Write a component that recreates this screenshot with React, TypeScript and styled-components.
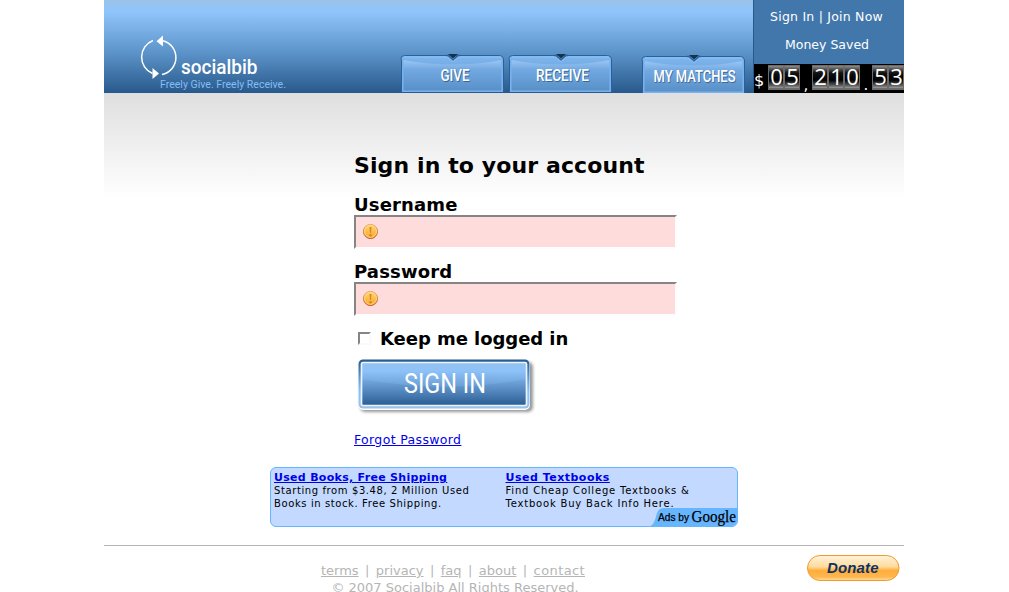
import React from "react";
import styled, { createGlobalStyle } from "styled-components";

const Global = createGlobalStyle`
  html, body { margin: 0; padding: 0; background: #fff; height: 592px; overflow: hidden; }
  body { font-family: "DejaVu Sans", Verdana, sans-serif; font-size: 13px; color: #000; }
  * { box-sizing: border-box; }
  svg { display: block; overflow: visible; }
`;

const Page = styled.div`
  width: 800px;
  margin-left: 104px;
  height: 592px;
`;

const Header = styled.header`
  display: flex;
  height: 93px;
  background: linear-gradient(#9cc3e8 0, #8fc5fc 11px, #8dc2f9 14px, #5f97cc 50px, #28598c 93px);
`;

const Brand = styled.div`
  width: 296px;
  padding: 32px 0 0 34px;
`;

const Nav = styled.nav`
  display: flex;
  align-items: flex-start;
  width: 353px;
  padding-top: 53px;
`;

const TabLink = styled.a<{ $gap: number; $drop?: number }>`
  width: 106px;
  height: 40px;
  margin-left: ${(p) => p.$gap}px;
  margin-top: ${(p) => p.$drop ?? 0}px;
`;

const Account = styled.aside`
  width: 151px;
  background: #4277ab;
  border-left: 1px solid #28598c;
  color: #fff;
`;

const AccountLine = styled.div<{ $top: number; $height: number; $spacing: number; $shift?: number }>`
  height: ${(p) => p.$height}px;
  padding-top: ${(p) => p.$top}px;
  padding-right: ${(p) => p.$shift ?? 0}px;
  line-height: 18px;
  font-size: 12.5px;
  letter-spacing: ${(p) => p.$spacing}px;
  text-align: center;
`;

const Counter = styled.div`
  display: flex;
  height: 29px;
  background: #000;
`;

const Mark = styled.span<{ $width: number; $size: number; $line: number; $left?: boolean }>`
  width: ${(p) => p.$width}px;
  height: 29px;
  font-size: ${(p) => p.$size}px;
  line-height: ${(p) => p.$line}px;
  text-align: ${(p) => (p.$left ? "left" : "center")};
  flex: none;
`;

const Digit = styled.span`
  width: 16px;
  height: 25px;
  flex: none;
  margin-top: 1px;
  border: solid #6c6c6c;
  border-width: 1px 1px 2px 1px;
  background: linear-gradient(#8c8c8c 0, #555 3px, #111 7px, #000 14px, #555 19px, #999 22px);
  font: 22px/21px "Open Sans", sans-serif;
  letter-spacing: -1px;
  text-align: center;
`;

const Main = styled.main`
  height: 374px;
  padding: 57px 0 0 250px;
  background: linear-gradient(#dfdfdf 0, #fff 105px);
`;

const Title = styled.h1`
  margin: 0;
  height: 42px;
  line-height: 32px;
  font-size: 22px;
  letter-spacing: 0.11px;
`;

const Field = styled.label`
  display: block;
  height: 67px;
`;

const Caption = styled.span`
  display: block;
  height: 23px;
  line-height: 26px;
  font-size: 18px;
  font-weight: bold;
  letter-spacing: 0.15px;
`;

const InputBox = styled.span`
  display: flex;
  align-items: center;
  width: 323px;
  height: 34px;
  padding: 0 0 2px 6px;
  border: 2px solid;
  border-color: #858585 #fdfdfd #fdfdfd #858585;
  background: #ffdcdc;
`;

const Remember = styled.label`
  display: flex;
  align-items: center;
  height: 24px;
  padding-left: 4px;
  font-size: 18px;
  font-weight: bold;
  letter-spacing: -0.05px;
`;

const Box = styled.span`
  width: 13px;
  height: 13px;
  margin-right: 9px;
  border: 2px solid;
  border-color: #858585 #fafafa #fafafa #858585;
`;

const SubmitArt = styled.div`
  height: 81px;
  padding-top: 3px;
`;

const Forgot = styled.a`
  display: block;
  line-height: 18px;
  font-size: 12.5px;
  letter-spacing: 0.35px;
  color: #0000e8;
  text-decoration: underline;
  width: max-content;
`;

const Ads = styled.section`
  display: flex;
  position: relative;
  width: 468px;
  height: 60px;
  margin-left: 166px;
  padding: 3px 0 0 3px;
  border: 1px solid #66b5ff;
  border-radius: 6px;
  background: #c3d9ff;
  overflow: hidden;
`;

const Ad = styled.div<{ $spacing: number }>`
  width: 232px;
  font-size: 10px;
  line-height: 13px;
  letter-spacing: ${(p) => p.$spacing}px;
  white-space: nowrap;
`;

const AdTitle = styled.a<{ $spacing: number }>`
  display: block;
  font-size: 11px;
  font-weight: bold;
  letter-spacing: ${(p) => p.$spacing}px;
  color: #0000e8;
  text-decoration: underline;
  width: max-content;
`;

const AdBrand = styled.div`
  position: absolute;
  right: -1px;
  bottom: -1px;
`;

const Footer = styled.footer`
  display: flex;
  margin-top: 18px;
  height: 47px;
  border-top: 1px solid #b5b5b5;
  color: #b5b5b5;
`;

const Legal = styled.div`
  width: 698px;
  padding-top: 16px;
  font-size: 13px;
  line-height: 17px;
`;

const LegalLinks = styled.div`
  text-align: center;
  word-spacing: 2.3px;
`;

const Copyright = styled.div`
  padding-left: 4px;
  text-align: center;
`;

const LegalLink = styled.a<{ $spacing?: number }>`
  letter-spacing: ${(p) => p.$spacing ?? 0}px;
  text-decoration: underline;
`;

const Donate = styled.div`
  padding: 8px 0 0 4px;
`;

type LabelProps = {
  x: number;
  y: number;
  w: number;
  size: number;
  children: string;
  fill?: string;
  weight?: number;
  family?: string;
};

const ArtLabel = ({ x, y, w, size, children, fill = "#fff", weight = 400, family = "Roboto, sans-serif" }: LabelProps) => (
  <text x={x} y={y} textLength={w} lengthAdjust="spacingAndGlyphs" fontFamily={family} fontSize={size} fontWeight={weight} fill={fill}>
    {children}
  </text>
);

const Logo = () => (
  <svg width="152" height="61" viewBox="138 32 152 61">
    <g fill="none" stroke="#fff" strokeWidth="1.5">
      <path d="M153 40.500A17.800 17.800 0 0 0 152.500 73.500" />
      <path d="M163 40.800A17.300 17.300 0 0 1 162 74.500" />
    </g>
    <path d="M156.500 41.200L163 35.500V46.500ZM159 73.500L152.500 68V79Z" fill="#fff" />
    <ArtLabel x={181} y={74} w={76.5} size={21} weight={500}>socialbib</ArtLabel>
    <ArtLabel x={160} y={87.5} w={126} size={11.5} fill="#86bdf4">Freely Give. Freely Receive.</ArtLabel>
  </svg>
);

type TabProps = { label: string; x: number; w: number; gap: number; drop?: number };

const TabShadow = styled.g`
  text {
    text-shadow: 1px 1px 0 #3b6894;
  }
`;

const Tab = ({ label, x, w, gap, drop }: TabProps) => (
  <TabLink $gap={gap} $drop={drop}>
    <svg width="106" height={drop ? 39 : 40} viewBox={drop ? "0 0 106 39" : "0 0 106 40"}>
      <defs>
        <linearGradient id={`tab${w}`} x1="0" y1="0" x2="0" y2="1">
          <stop offset="0" stopColor="#80b6ee" />
          <stop offset="0.45" stopColor="#70a6df" />
          <stop offset="1" stopColor="#568ec6" />
        </linearGradient>
        <linearGradient id={`gloss${w}`} x1="0" y1="0" x2="0" y2="1">
          <stop offset="0" stopColor="#a5cef8" />
          <stop offset="1" stopColor="#70a6df" />
        </linearGradient>
      </defs>
      <path d="M1.500 39V7L0.800 6Q1 2.500 4.500 2.500H99.500Q103 2.500 103.500 6L103.500 7V39" fill={`url(#tab${w})`} stroke="#28629b" />
      <path d="M3 7Q53 16 102 7V17H3Z" fill={`url(#gloss${w})`} opacity="0.75" />
      <path d="M2.800 7V38.200H102.200V7" fill="none" stroke="#78b1ed" strokeWidth="1.6" />
      <path d="M4 4H47L53 8.500L59 4H101" fill="none" stroke="#8ec1f5" />
      <path d="M46 2.500H48L53 7L58 2.500H60" fill="#5e9cda" stroke="#28629b" strokeWidth="1.3" />
      <path d="M48 1H58L53 5.500Z" fill="#15324f" />
      <TabShadow>
        <ArtLabel x={x} y={28} w={w} size={16} weight={500}>{label}</ArtLabel>
      </TabShadow>
    </svg>
  </TabLink>
);

const Warning = () => (
  <svg width="17" height="17" viewBox="0 0 17 17">
    <defs>
      <linearGradient id="amber" x1="0" y1="0" x2="0" y2="1">
        <stop offset="0" stopColor="#ffd88c" />
        <stop offset="0.5" stopColor="#ffbd4a" />
        <stop offset="1" stopColor="#f8a534" />
      </linearGradient>
      <linearGradient id="rim" x1="0" y1="0" x2="0" y2="1">
        <stop offset="0" stopColor="#e9a04c" />
        <stop offset="1" stopColor="#b9501c" />
      </linearGradient>
    </defs>
    <circle cx="8.500" cy="8.500" r="7" fill="url(#amber)" stroke="url(#rim)" />
    <circle cx="8.500" cy="8.300" r="6" fill="none" stroke="#ffe08a" strokeWidth="0.8" />
    <path d="M7.500 4H9.500L9 10H8Z" fill="#d08a20" />
    <circle cx="8.500" cy="12.200" r="1.200" fill="#d08a20" />
  </svg>
);

const SignIn = () => (
  <svg width="190" height="66" viewBox="354 353 190 66">
    <defs>
      <filter id="soft" x="-10%" y="-20%" width="120%" height="150%">
        <feGaussianBlur stdDeviation="1.8" />
      </filter>
      <linearGradient id="frame" x1="0" y1="0" x2="0" y2="1">
        <stop offset="0" stopColor="#28598c" />
        <stop offset="0.45" stopColor="#6ca4dc" />
        <stop offset="0.65" stopColor="#8bc0f7" />
        <stop offset="1" stopColor="#9cc3e8" />
      </linearGradient>
      <linearGradient id="face" x1="0" y1="0" x2="0" y2="1">
        <stop offset="0" stopColor="#93c0ed" />
        <stop offset="0.2" stopColor="#8bc1f9" />
        <stop offset="1" stopColor="#2a5d92" />
      </linearGradient>
      <linearGradient id="shine" x1="0" y1="0" x2="0" y2="1">
        <stop offset="0" stopColor="#9bcbfb" stopOpacity="0.1" />
        <stop offset="1" stopColor="#9bcbfb" stopOpacity="0.2" />
      </linearGradient>
    </defs>
    <rect x="360" y="362" width="173" height="50" rx="5" fill="#000" opacity="0.4" filter="url(#soft)" />
    <rect x="358" y="359" width="172" height="51" rx="5" fill="#fff" />
    <rect x="358.500" y="359.500" width="171" height="49" rx="4.500" fill="url(#frame)" />
    <rect x="361.500" y="362.500" width="165" height="43" rx="1.500" fill="url(#face)" stroke="#eaf4ff" strokeWidth="1.7" />
    <path d="M362 379Q444 394 526 379V363H362Z" fill="url(#shine)" />
    <ArtLabel x={404} y={393} w={82} size={27} weight={400}>SIGN IN</ArtLabel>
  </svg>
);

const GoogleTag = () => (
  <svg width="90" height="19" viewBox="648 508 90 19">
    <path d="M648 527Q653 526 655 520L657 513Q659 508 664 508H738V527Z" fill="#66b5ff" />
    <g stroke="#000" strokeWidth="0.25">
      <ArtLabel x={658} y={521} w={31} size={10} fill="#000" family="Liberation Sans, sans-serif">Ads by</ArtLabel>
      <ArtLabel x={691.5} y={522} w={44.5} size={16.5} fill="#000" family="Liberation Serif, serif">Google</ArtLabel>
    </g>
  </svg>
);

const DonateButton = () => (
  <svg width="94" height="28" viewBox="806 554 94 28">
    <defs>
      <linearGradient id="gold" x1="0" y1="0" x2="0" y2="1">
        <stop offset="0" stopColor="#fff3dc" />
        <stop offset="0.45" stopColor="#ffdb9c" />
        <stop offset="0.6" stopColor="#ffae3c" />
        <stop offset="0.85" stopColor="#ffb64d" />
        <stop offset="1" stopColor="#ffe0a0" />
      </linearGradient>
    </defs>
    <rect x="807.500" y="555.500" width="91.500" height="25" rx="12.500" fill="url(#gold)" stroke="#ef9a2d" />
    <text x="827" y="573" textLength="51.500" fontFamily="Liberation Sans, sans-serif" fontSize="15" fontWeight="bold" fontStyle="italic" fill="#0e3265">Donate</text>
  </svg>
);

export default function App() {
  return (
    <>
      <Global />
      <Page>
        <Header>
          <Brand><Logo /></Brand>
          <Nav>
            <Tab label="GIVE" x={40.5} w={29} gap={0} />
            <Tab label="RECEIVE" x={28} w={53} gap={2} />
            <Tab label="MY MATCHES" x={12.5} w={82} gap={27} drop={1} />
          </Nav>
          <Account>
            <AccountLine $top={8} $height={36} $spacing={0.22} $shift={5}>Sign In | Join Now</AccountLine>
            <AccountLine $top={0} $height={28} $spacing={0} $shift={4}>Money Saved</AccountLine>
            <Counter>
              <Mark $width={14} $size={16} $line={33} $left>$</Mark>
              <Digit>0</Digit><Digit>5</Digit>
              <Mark $width={12} $size={15} $line={42}>,</Mark>
              <Digit>2</Digit><Digit>1</Digit><Digit>0</Digit>
              <Mark $width={12} $size={15} $line={42}>.</Mark>
              <Digit>5</Digit><Digit>3</Digit>
            </Counter>
          </Account>
        </Header>
        <Main>
          <Title>Sign in to your account</Title>
          <Field><Caption>Username</Caption><InputBox><Warning /></InputBox></Field>
          <Field><Caption>Password</Caption><InputBox><Warning /></InputBox></Field>
          <Remember><Box />Keep me logged in</Remember>
          <SubmitArt><SignIn /></SubmitArt>
          <Forgot>Forgot Password</Forgot>
        </Main>
        <Ads>
          <Ad $spacing={0.6}>
            <AdTitle $spacing={0.3}>Used Books, Free Shipping</AdTitle>
            Starting from $3.48, 2 Million Used<br />Books in stock. Free Shipping.
          </Ad>
          <Ad $spacing={0.8}>
            <AdTitle $spacing={0.5}>Used Textbooks</AdTitle>
            Find Cheap College Textbooks &amp;<br />Textbook Buy Back Info Here.
          </Ad>
          <AdBrand><GoogleTag /></AdBrand>
        </Ads>
        <Footer>
          <Legal>
            <LegalLinks>
              <LegalLink>terms</LegalLink> | <LegalLink>privacy</LegalLink> | <LegalLink>faq</LegalLink> | <LegalLink>about</LegalLink> | <LegalLink $spacing={0.4}>contact</LegalLink>
            </LegalLinks>
            <Copyright>© 2007 Socialbib All Rights Reserved.</Copyright>
          </Legal>
          <Donate><DonateButton /></Donate>
        </Footer>
      </Page>
    </>
  );
}
